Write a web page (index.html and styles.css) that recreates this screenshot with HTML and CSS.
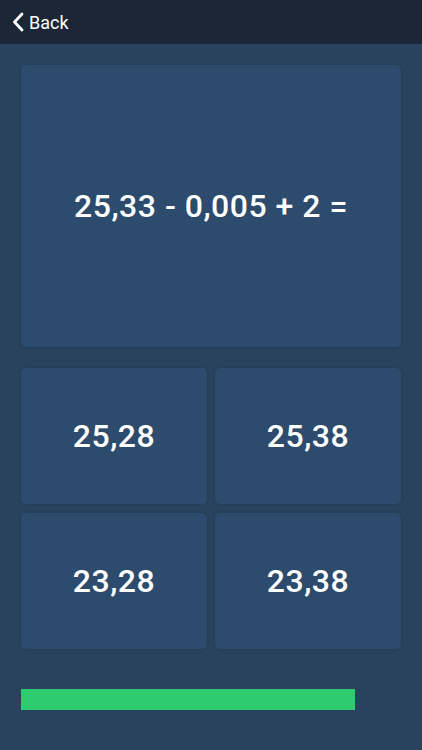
FILE: index.html
```html
<!DOCTYPE html>
<html>
<head>
<meta charset="utf-8">
<link rel="stylesheet" href="styles.css">
</head>
<body>
<div class="app">
  <header class="nav">
    <a class="back">
      <svg class="chev" width="14" height="20" viewBox="0 0 14 20"><path d="M11 2 L3.5 10 L11 18" fill="none" stroke="#fff" stroke-width="2.8" stroke-linecap="round" stroke-linejoin="round"/></svg>
      <span>Back</span>
    </a>
  </header>
  <main class="content">
    <div class="card question">25,33 - 0,005 + 2 =</div>
    <div class="answers">
      <div class="card answer">25,28</div>
      <div class="card answer">25,38</div>
      <div class="card answer">23,28</div>
      <div class="card answer">23,38</div>
    </div>
    <div class="progress"><div class="bar" style="width:88%"></div></div>
  </main>
</div>
</body>
</html>
```
FILE: styles.css
```css
* { box-sizing: border-box; }
html, body { margin: 0; padding: 0; }
body {
  width: 422px;
  height: 750px;
  background: #29435f;
  font-family: Roboto, "Liberation Sans", sans-serif;
  color: #fff;
  overflow: hidden;
}
.nav {
  height: 44px;
  background: #1b2737;
  display: flex;
  align-items: center;
  padding-left: 11px;
}
.back {
  display: flex;
  align-items: center;
  gap: 4px;
  font-size: 18px;
  color: #fff;
}
.content {
  padding: 21px 21px 0 21px;
  display: flex;
  flex-direction: column;
}
.card {
  background: #2d4b6c;
  border-radius: 5px;
  box-shadow: 0 0 3px rgba(20, 35, 55, 0.3);
  display: flex;
  align-items: center;
  justify-content: center;
  font-weight: 500;
  font-size: 32px;
  letter-spacing: 0.5px;
}
.question {
  height: 282px;
}
.answers {
  margin-top: 21px;
  display: grid;
  grid-template-columns: 1fr 1fr;
  grid-auto-rows: 136px;
  gap: 9px 8px;
}
.progress {
  margin-top: 40px;
  height: 21px;
}
.bar {
  height: 100%;
  background: #2ecb6f;
}
```
